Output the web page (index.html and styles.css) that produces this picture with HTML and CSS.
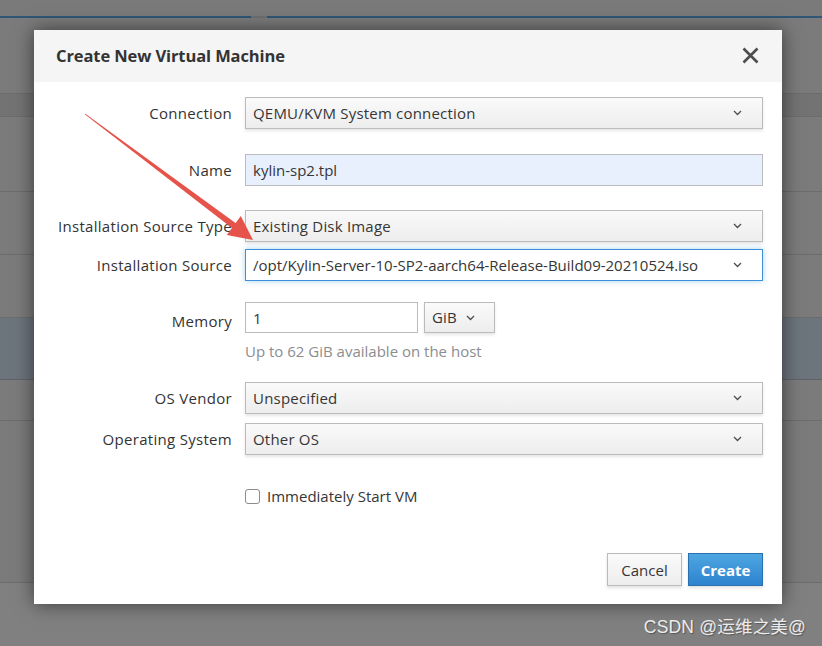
FILE: index.html
```html
<!DOCTYPE html>
<html lang="en">
<head>
<meta charset="utf-8">
<title>Create New Virtual Machine</title>
<link rel="stylesheet" href="styles.css">
</head>
<body>
<div class="page">
  <div class="bg-top"></div>
  <div class="bg-tabs">
    <div class="tab tab-left"></div>
    <div class="tab-gap"></div>
    <div class="tab tab-right"></div>
  </div>
  <div class="bg-row bg-a"></div>
  <div class="bg-row bg-head"></div>
  <div class="bg-row bg-b"></div>
  <div class="bg-row bg-c"></div>
  <div class="bg-row bg-d"></div>
  <div class="bg-row bg-sel"></div>
  <div class="bg-row bg-e"></div>
  <div class="bg-row bg-f"></div>
  <div class="bg-bottom"></div>
</div>

<div class="dialog">
  <div class="dialog-header">
    <h1 class="dialog-title">Create New Virtual Machine</h1>
    <span class="close">
      <svg width="17" height="17" viewBox="0 0 17 17"><path d="M1.5 1.5 L15.5 15.5 M15.5 1.5 L1.5 15.5" stroke="#4d4d4d" stroke-width="2.7" fill="none"/></svg>
    </span>
  </div>
  <div class="dialog-body">
    <div class="row">
      <label class="label">Connection</label>
      <div class="control select">QEMU/KVM System connection<span class="chev"><svg width="9" height="6" viewBox="0 0 9 6"><path d="M1 1 L4.5 4.5 L8 1" stroke="#4d4d4d" stroke-width="1.3" fill="none"/></svg></span></div>
    </div>
    <div class="row mt-name">
      <label class="label">Name</label>
      <div class="control input autofill">kylin-sp2.tpl</div>
    </div>
    <div class="row mt-type">
      <label class="label">Installation Source Type</label>
      <div class="control select">Existing Disk Image<span class="chev"><svg width="9" height="6" viewBox="0 0 9 6"><path d="M1 1 L4.5 4.5 L8 1" stroke="#4d4d4d" stroke-width="1.3" fill="none"/></svg></span></div>
    </div>
    <div class="row mt-source">
      <label class="label">Installation Source</label>
      <div class="control input focused">/opt/Kylin-Server-10-SP2-aarch64-Release-Build09-20210524.iso<span class="chev"><svg width="9" height="6" viewBox="0 0 9 6"><path d="M1 1 L4.5 4.5 L8 1" stroke="#4d4d4d" stroke-width="1.3" fill="none"/></svg></span></div>
    </div>
    <div class="row mt-memory">
      <label class="label label-low">Memory</label>
      <div class="memory">
        <div class="input mem-input">1</div>
        <div class="select unit">GiB<span class="chev-small"><svg width="9" height="6" viewBox="0 0 9 6"><path d="M1 1 L4.5 4.5 L8 1" stroke="#4d4d4d" stroke-width="1.3" fill="none"/></svg></span></div>
      </div>
    </div>
    <div class="help">Up to 62 GiB available on the host</div>
    <div class="row mt-vendor">
      <label class="label">OS Vendor</label>
      <div class="control select">Unspecified<span class="chev"><svg width="9" height="6" viewBox="0 0 9 6"><path d="M1 1 L4.5 4.5 L8 1" stroke="#4d4d4d" stroke-width="1.3" fill="none"/></svg></span></div>
    </div>
    <div class="row mt-os">
      <label class="label">Operating System</label>
      <div class="control select">Other OS<span class="chev"><svg width="9" height="6" viewBox="0 0 9 6"><path d="M1 1 L4.5 4.5 L8 1" stroke="#4d4d4d" stroke-width="1.3" fill="none"/></svg></span></div>
    </div>
    <div class="check-row">
      <span class="checkbox"></span>
      <span class="check-label">Immediately Start VM</span>
    </div>
  </div>
  <div class="dialog-footer">
    <button class="btn btn-default">Cancel</button>
    <button class="btn btn-primary">Create</button>
  </div>
</div>

<svg class="annot" width="822" height="646" viewBox="0 0 822 646">
  <polygon points="85,113.5 85,114.5 232.6,228.4 236.2,223.4" fill="#e5534b"/>
  <polygon points="253,240 226.8,235 240.8,216" fill="#e5534b"/>
</svg>

<div class="watermark">CSDN @运维之美@</div>
</body>
</html>
```

FILE: styles.css
```css
* { box-sizing: border-box; }

html, body {
  margin: 0;
  padding: 0;
}

body {
  width: 822px;
  height: 646px;
  overflow: hidden;
  background: #7b7b7b;
  font-family: "Open Sans", "Liberation Sans", sans-serif;
  color: #363636;
  position: relative;
}

/* dimmed background page */
.page {
  display: flex;
  flex-direction: column;
  height: 646px;
}
.bg-top { height: 16px; background: #7a7a7a; }
.bg-tabs { display: flex; height: 2px; }
.tab { background: #2f5677; }
.tab-left { width: 251px; }
.tab-gap { width: 16px; background: #6f6f6f; }
.tab-right { flex: 1; }
.bg-row { border-bottom: 1px solid #6c6c6c; }
.bg-a { height: 76px; background: #7b7b7b; }
.bg-head { height: 23px; background: #737373; }
.bg-b { height: 75px; background: #7b7b7b; }
.bg-c { height: 63px; background: #7b7b7b; }
.bg-d { height: 63px; background: #7b7b7b; }
.bg-sel { height: 62px; background: #6c747c; border-bottom-color: #5f6368; }
.bg-e { height: 41px; background: #7b7b7b; }
.bg-f { height: 162px; background: #7b7b7b; }
.bg-bottom { flex: 1; background: #808080; }

/* modal dialog */
.dialog {
  position: absolute;
  left: 34px;
  top: 30px;
  width: 748px;
  background: #fff;
  box-shadow: 0 0 18px rgba(0, 0, 0, 0.55);
}

.dialog-header {
  height: 52px;
  background: #f5f5f5;
  display: flex;
  align-items: center;
  justify-content: space-between;
  padding: 0 23px 0 22px;
}

.dialog-title {
  margin: 0;
  font-size: 16.5px;
  font-weight: 700;
  color: #333333;
  letter-spacing: -0.1px;
  padding-bottom: 1px;
}

.close {
  display: flex;
  width: 17px;
  height: 17px;
  margin-bottom: 1px;
}

.dialog-body {
  padding: 15px 19px 0 12px;
  display: flex;
  flex-direction: column;
}

.row {
  display: flex;
  align-items: center;
}

.label {
  width: 186px;
  margin-right: 13px;
  text-align: right;
  font-size: 15px;
  line-height: 20px;
  letter-spacing: 0.3px;
  color: #333333;
  white-space: nowrap;
  padding-bottom: 1px;
}
.label-low { padding-top: 6px; padding-bottom: 0; }

.mt-name { margin-top: 25px; }
.mt-type { margin-top: 24px; }
.mt-source { margin-top: 7px; }
.mt-memory { margin-top: 21px; }
.mt-vendor { margin-top: 21px; }
.mt-os { margin-top: 9px; }

.control {
  width: 518px;
  height: 32px;
}

.select, .input {
  display: flex;
  align-items: center;
  position: relative;
  padding-left: 7px;
  font-size: 15px;
  color: #363636;
  border: 1px solid #bbbbbb;
  white-space: nowrap;
}

.select {
  background: linear-gradient(#fafafa, #ededed);
  box-shadow: 0 2px 3px rgba(3, 3, 3, 0.1);
  letter-spacing: 0.2px;
  padding-bottom: 1px;
}

.input { background: #fff; }
.autofill { background: #e8f0fe; }
.focused {
  border-color: #3c8fd8;
  box-shadow: 0 0 6px rgba(0, 136, 206, 0.35);
}

.chev {
  position: absolute;
  right: 20px;
  top: 12px;
  display: flex;
}

.memory {
  display: flex;
  gap: 6px;
}
.mem-input {
  width: 173px;
  height: 31px;
}
.unit {
  width: 71px;
  height: 31px;
  padding-left: 7px;
}
.chev-small {
  display: flex;
  margin-left: 9px;
  margin-top: 1px;
}

.help {
  margin-top: 8px;
  margin-left: 199px;
  font-size: 15px;
  line-height: 20px;
  color: #8b8d8f;
}

.check-row {
  margin-top: 31px;
  margin-left: 199px;
  display: flex;
  align-items: center;
  height: 20px;
}
.checkbox {
  width: 15px;
  height: 15px;
  border: 1px solid #8c8c8c;
  border-radius: 3px;
  background: #fff;
  margin-top: 1px;
}
.check-label {
  margin-left: 7px;
  font-size: 15px;
  color: #363636;
}

.dialog-footer {
  display: flex;
  justify-content: flex-end;
  gap: 6px;
  padding: 47px 19px 18px 0;
}

.btn {
  height: 33px;
  width: 75px;
  font-family: "Open Sans", "Liberation Sans", sans-serif;
  font-size: 15px;
  font-weight: 600;
  border: 1px solid #bbbbbb;
  padding: 0;
  box-shadow: 0 2px 3px rgba(3, 3, 3, 0.12);
}
.btn-default {
  background: linear-gradient(#fafafa, #ededed);
  color: #363636;
  font-weight: 500;
}
.btn-primary {
  background: linear-gradient(#4ea6e1, #2e83cf);
  border-color: #2a6fae;
  color: #fff;
  font-weight: 700;
}

.annot {
  position: absolute;
  left: 0;
  top: 0;
  pointer-events: none;
}

.watermark {
  position: absolute;
  right: 16px;
  top: 613px;
  font-family: "Liberation Sans", "Noto Sans CJK SC", sans-serif;
  font-size: 17.5px;
  color: #ececec;
  text-shadow: 1px 1px 1px rgba(60, 60, 60, 0.6);
  letter-spacing: 0.2px;
}
```
